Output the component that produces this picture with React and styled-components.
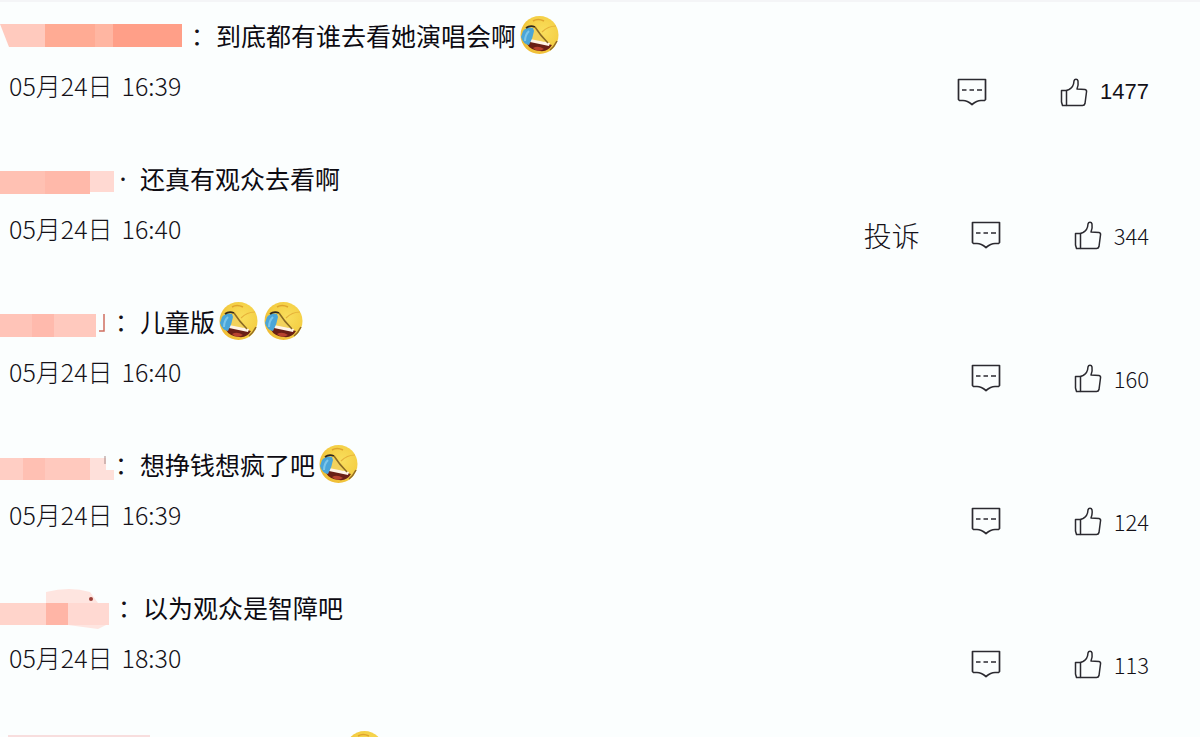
import React from 'react'
import styled, { createGlobalStyle } from 'styled-components';

const GlobalStyle = createGlobalStyle`
    * {
        box-sizing: border-box;
    }
    body {
        margin: 0;
        overflow: hidden;
        background: #fbfefe;
        color: #141118;
        font-family: "Noto Sans CJK SC", sans-serif;
    }
`;

const Page = styled.main`
    height: 100vh;
    overflow: hidden;
    border-top: 2px solid #f4f5f7;
`;

const List = styled.ul`
    margin: 0;
    padding: 0;
    list-style: none;
`;

const Item = styled.li`
    padding: 13px 51px 26px 0;
`;

const Head = styled.div`
    display: flex;
    align-items: center;
    height: 40px;
`;

const Name = styled.div`
    flex: none;
    width: ${(p) => p.$width}px;
    height: 40px;

    svg {
        display: block;
        overflow: visible;
    }
`;

const Separator = styled.span`
    flex: none;
    width: 25px;
    font-size: ${(p) => (p.$dot ? 16 : 24)}px;
    line-height: 40px;
`;

const Message = styled.p`
    display: flex;
    align-items: center;
    gap: 6px;
    margin: 0;
    font-size: 25px;
    line-height: 40px;
    color: #0d0b12;

    span {
        margin-right: -2px;
    }
`;

const Meta = styled.div`
    display: flex;
    justify-content: space-between;
    height: 64px;
    padding-left: 9px;
`;

const Time = styled.time`
    display: flex;
    gap: 9px;
    padding-top: 10px;
    font-size: 25px;
    font-weight: 300;
    line-height: 40px;
`;

const Actions = styled.div`
    display: flex;
    align-items: center;
    padding-top: 10px;
`;

const Action = styled.button`
    display: flex;
    align-items: center;
    gap: 12px;
    margin: 0;
    padding: 0;
    border: none;
    background: none;
    color: inherit;
    font-family: inherit;
    font-size: 22px;
    font-weight: 300;
    line-height: 40px;
    cursor: pointer;
`;

const Report = styled(Action)`
    margin-right: 51px;
    font-size: 28px;
`;

const Like = styled(Action)`
    margin-left: 73px;
    font-family: ${(p) => (p.$arial ? '"Liberation Sans", sans-serif' : 'inherit')};
`;

function CommentIcon() {
    return (
        <svg width="30" height="28" viewBox="0 0 30 28" fill="none" stroke="#2b2a30" strokeWidth="1.7" strokeLinejoin="round">
            <path d="M1.5 1.5H28.5V21.5L27.5 22.5H24C20 22.5 18 24 15 26.5C12 24 10 22.5 6 22.5H2.5L1.5 21.5Z" />
            <path d="M5 12H9.5M12.5 12H17M20 12H25" strokeWidth="1.3" />
        </svg>
    )
}

function LikeIcon() {
    return (
        <svg width="28" height="30" viewBox="0 0 28 30" fill="none" stroke="#2b2a30" strokeWidth="1.5" strokeLinejoin="round">
            <path d="M1.5 13.5H6.5V28.5H2.5L1.5 25Z" />
            <path d="M6.5 13.5L9 12.5C12 11 13.8 8 14 4C14.5 1.5 17.5 1.5 18 4C18.5 7 18 9.5 17 12L25 12.5Q27 13 26.5 15L25 26.5Q24.5 28.5 22.5 28.5H6.5" />
        </svg>
    )
}

// face rolling with laughter: tears on the left, open mouth at the bottom
function Emoji() {
    return (
        <svg width="39" height="40" viewBox="0 0 39 40" role="img" aria-label="笑哭">
            <defs>
                <radialGradient id="face" cx="0.6" cy="0.4" r="0.62">
                    <stop offset="0" stopColor="#f9de5c" />
                    <stop offset="0.7" stopColor="#f4cf45" />
                    <stop offset="1" stopColor="#f0bd35" />
                </radialGradient>
            </defs>
            <circle cx="19.5" cy="20" r="19" fill="url(#face)" />
            <path d="M13 6Q18 3 24 6" fill="none" stroke="#dfa52e" strokeWidth="1.5" />
            <path d="M22 17Q28 11 36 11" fill="none" stroke="#e6b23a" strokeWidth="1.2" />
            <path d="M7 29Q8 25 12 25L32 30Q28 37 20 36Q10 35 7 29Z" fill="#6a1f16" />
            <path d="M11 23L30 28L29 31L10 27Z" fill="#fff4e8" />
            <path d="M13 33Q18 30 24 34Q18 38 13 33Z" fill="#b8432f" />
            <path d="M14 14L10 24L25 27L17 15Z" fill="#f2d25c" />
            <path d="M3 16Q7 11 13 13L14 16Q13 23 9 30Q3 29 1 22Z" fill="#4aa5d8" />
            <path d="M9 16Q5 20 5 26" fill="none" stroke="#7cc6ea" strokeWidth="2" />
            <path d="M6 13Q10 10 15 12" fill="none" stroke="#33291d" strokeWidth="1.8" />
            <path d="M15 12Q20 20 28 28" fill="none" stroke="#8a6a25" strokeWidth="1.5" />
            <path d="M37 26Q34 32 30 35" fill="none" stroke="#8f6a26" strokeWidth="1.5" />
        </svg>
    )
}

// pixelated blocks that cover the user names: x, y, width, height, colour
const mosaics = {
    a: [[45, 9, 50, 23, '#ffab94'], [95, 9, 18, 23, '#ffb6a2'], [113, 9, 69, 23, '#ff9f88']],
    b: [[0, 13, 45, 23, '#ffc1b3'], [45, 13, 45, 23, '#ffb9aa'], [90, 13, 24, 21, '#ffd9d2']],
    c: [[0, 13, 32, 23, '#ffc4b8'], [32, 13, 22, 23, '#ffbaad'], [54, 13, 42, 23, '#ffc9be']],
    d: [[0, 14, 23, 22, '#ffcec4'], [23, 14, 22, 22, '#ffc0b3'], [45, 14, 45, 22, '#ffc9be'], [90, 14, 16, 22, '#fee0da'], [104, 26, 10, 10, '#fee0da']],
    e: [[0, 16, 46, 22, '#ffd4cb'], [46, 16, 22, 22, '#ffb5a6'], [68, 16, 41, 22, '#ffd9d2']],
    f: [[8, 5, 142, 12, '#f8dede']],
};

function Mosaic({ kind }) {
    return (
        <svg width="100%" height="40" aria-hidden="true">
            {kind === 'a' && <path d="M0 9H45V32H9Z" fill="#ffcabe" />}
            {kind === 'e' && <path d="M46 16V5Q70 -1 90 5L98 16ZM68 38H106L98 42Z" fill="#fee5e0" />}
            {mosaics[kind].map(([x, y, w, h, fill]) => (
                <rect key={x} x={x} y={y} width={w} height={h} fill={fill} />
            ))}
            {kind === 'c' && <path d="M104 13V30H99" fill="none" stroke="#cf6f60" strokeWidth="1.5" />}
            {kind === 'd' && <path d="M105 12V20" stroke="#a68b89" />}
            {kind === 'e' && <circle cx="91" cy="12" r="2" fill="#9c3f38" />}
        </svg>
    )
}

const comments = [
    { id: 'a', nameWidth: 191, sep: '：', text: '到底都有谁去看她演唱会啊', emojis: 1, day: '05月24日', hour: '16:39', likes: 1477 },
    { id: 'b', nameWidth: 115, sep: '·', text: '还真有观众去看啊', emojis: 0, day: '05月24日', hour: '16:40', likes: 344, report: true },
    { id: 'c', nameWidth: 115, sep: '：', text: '儿童版', emojis: 2, day: '05月24日', hour: '16:40', likes: 160 },
    { id: 'd', nameWidth: 115, sep: '：', text: '想挣钱想疯了吧', emojis: 1, day: '05月24日', hour: '16:39', likes: 124 },
    { id: 'e', nameWidth: 118, sep: '：', text: '以为观众是智障吧', emojis: 0, day: '05月24日', hour: '18:30', likes: 113 },
];

function Comment({ comment }) {
    return (
        <Item>
            <Head>
                <Name $width={comment.nameWidth}><Mosaic kind={comment.id} /></Name>
                <Separator $dot={comment.sep === '·'}>{comment.sep}</Separator>
                <Message>
                    <span>{comment.text}</span>
                    {Array.from({ length: comment.emojis }, (_, i) => <Emoji key={i} />)}
                </Message>
            </Head>
            <Meta>
                <Time>
                    <span>{comment.day}</span>
                    <span>{comment.hour}</span>
                </Time>
                <Actions>
                    {comment.report && <Report type="button">投诉</Report>}
                    <Action type="button" aria-label="回复"><CommentIcon /></Action>
                    <Like type="button" $arial={comment.likes > 999}><LikeIcon />{comment.likes}</Like>
                </Actions>
            </Meta>
        </Item>
    )
}

function App() {
    return (
        <>
            <GlobalStyle />
            <Page>
                <List>
                    {comments.map((c) => <Comment key={c.id} comment={c} />)}
                    <Item>
                        <Head>
                            <Name $width={345}><Mosaic kind="f" /></Name>
                            <Emoji />
                        </Head>
                    </Item>
                </List>
            </Page>
        </>
    )
}

export default App
